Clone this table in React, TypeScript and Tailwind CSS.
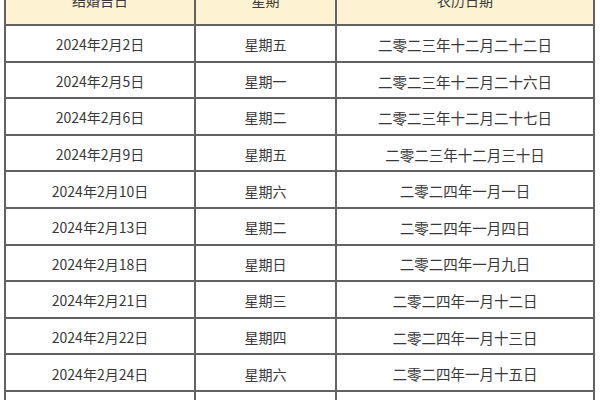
import React from "react";

const rows: [string, string, string][] = [
  ["2024年2月2日", "星期五", "二零二三年十二月二十二日"],
  ["2024年2月5日", "星期一", "二零二三年十二月二十六日"],
  ["2024年2月6日", "星期二", "二零二三年十二月二十七日"],
  ["2024年2月9日", "星期五", "二零二三年十二月三十日"],
  ["2024年2月10日", "星期六", "二零二四年一月一日"],
  ["2024年2月13日", "星期二", "二零二四年一月四日"],
  ["2024年2月18日", "星期日", "二零二四年一月九日"],
  ["2024年2月21日", "星期三", "二零二四年一月十二日"],
  ["2024年2月22日", "星期四", "二零二四年一月十三日"],
  ["2024年2月24日", "星期六", "二零二四年一月十五日"],
  ["", "", ""],
];

export default function App() {
  return (
    <div
      className="w-[600px] h-[400px] overflow-hidden bg-white text-[#383838]"
      style={{ fontFamily: '"Noto Sans CJK SC", "Noto Sans", sans-serif' }}
    >
      <div className="ml-[4px] mt-[-26px] w-[591px] border-l-2 border-[#626262]">
        <div className="flex h-[52px] bg-[#fdf3d2] border-b-2 border-[#626262] text-[14px] pt-[2px]">
          <div className="w-[190px] flex items-center justify-center border-r-2 border-[#626262]">结婚吉日</div>
          <div className="w-[141px] flex items-center justify-center border-r-2 border-[#626262]">星期</div>
          <div className="flex-1 flex items-center justify-center border-r-2 border-[#626262]">农历日期</div>
        </div>
        {rows.map((r, i) => (
          <div key={i} className="flex h-[36.6px] border-b-2 border-[#626262]">
            <div className="w-[190px] flex items-center justify-center border-r-2 border-[#626262] text-[14px] pt-[3px]">{r[0]}</div>
            <div className="w-[141px] flex items-center justify-center border-r-2 border-[#626262] text-[14px] pt-[3px]">{r[1]}</div>
            <div className="flex-1 flex items-center justify-center border-r-2 border-[#626262] text-[14.5px] pt-[3px]">{r[2]}</div>
          </div>
        ))}
      </div>
    </div>
  );
}
